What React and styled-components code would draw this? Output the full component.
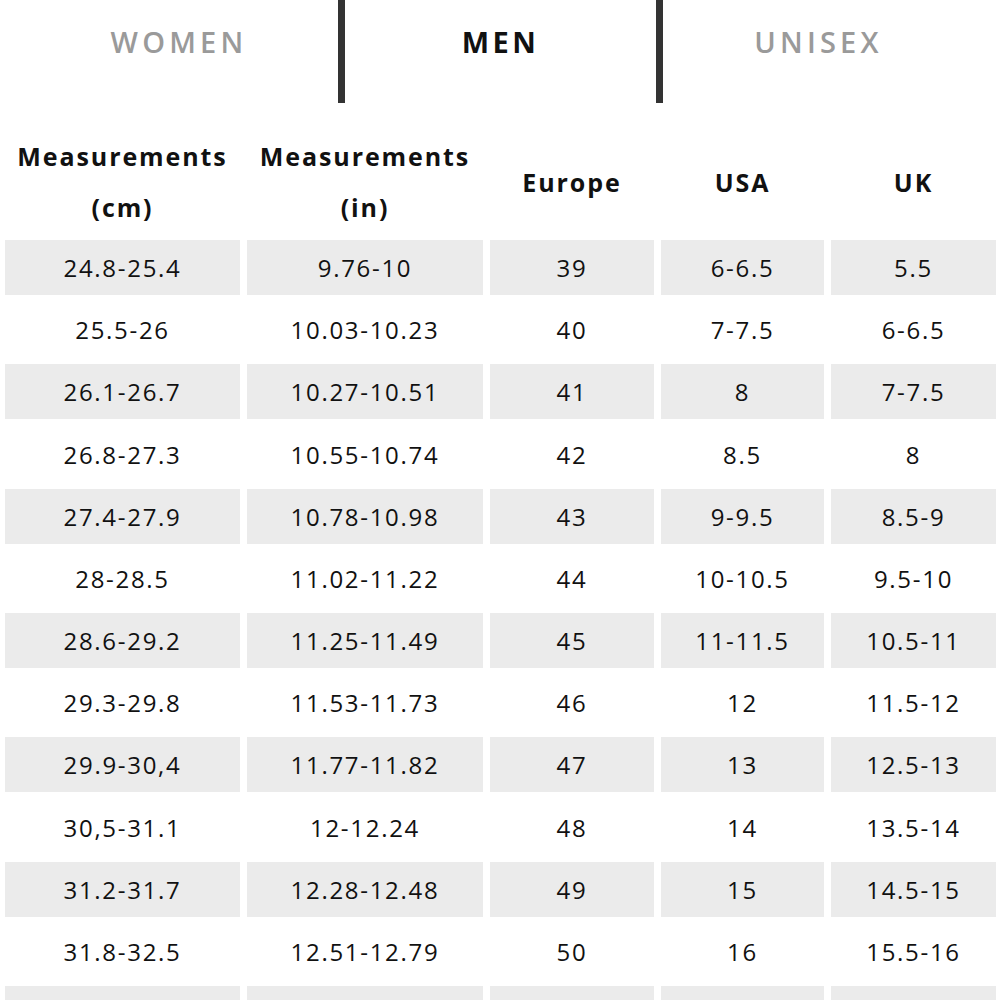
import React from "react";
import styled, { createGlobalStyle } from "styled-components";

const Global = createGlobalStyle`
  html, body { margin: 0; padding: 0; background: #fff; }
  body { font-family: "Open Sans", "Noto Sans", sans-serif; color: #111; }
`;

const Page = styled.div`
  width: 1000px;
  height: 1000px;
  overflow: hidden;
  background: #fff;
`;

const Tabs = styled.div`
  display: grid;
  grid-template-columns: 338px 7px 311px 7px 1fr;
  height: 103px;
`;

const Tab = styled.div`
  display: flex;
  justify-content: center;
  padding: 24px ${(p) => p.$pr || 0}px 0 ${(p) => p.$pl || 0}px;
  font-size: 29px;
  line-height: 36px;
  letter-spacing: ${(p) => (p.$active ? 3.5 : 4.2)}px;
  font-weight: ${(p) => (p.$active ? 700 : 600)};
  color: ${(p) => (p.$active ? "#111" : "#9a9a9a")};
`;

const Divider = styled.div`
  background: #333;
`;

const Table = styled.div`
  display: grid;
  grid-template-columns: 235px 236px 164px 163px 165px;
  column-gap: 7px;
  row-gap: 7.17px;
  padding: 28px 4px 0 5px;
`;

const HeadCell = styled.div`
  height: 102px;
  display: flex;
  align-items: center;
  justify-content: center;
  text-align: center;
  font-weight: 700;
  font-size: 25px;
  line-height: 51px;
  letter-spacing: 1.9px;
  color: #111;
`;

const Cell = styled.div`
  height: 55px;
  display: flex;
  align-items: center;
  justify-content: center;
  font-size: 24px;
  letter-spacing: 1.7px;
  color: #111;
  background: ${(p) => (p.$shade ? "#ebebeb" : "#fff")};
`;

const headers = [
  ["Measurements", "(cm)"],
  ["Measurements", "(in)"],
  ["Europe"],
  ["USA"],
  ["UK"],
];

const rows = [
  ["24.8-25.4", "9.76-10", "39", "6-6.5", "5.5"],
  ["25.5-26", "10.03-10.23", "40", "7-7.5", "6-6.5"],
  ["26.1-26.7", "10.27-10.51", "41", "8", "7-7.5"],
  ["26.8-27.3", "10.55-10.74", "42", "8.5", "8"],
  ["27.4-27.9", "10.78-10.98", "43", "9-9.5", "8.5-9"],
  ["28-28.5", "11.02-11.22", "44", "10-10.5", "9.5-10"],
  ["28.6-29.2", "11.25-11.49", "45", "11-11.5", "10.5-11"],
  ["29.3-29.8", "11.53-11.73", "46", "12", "11.5-12"],
  ["29.9-30,4", "11.77-11.82", "47", "13", "12.5-13"],
  ["30,5-31.1", "12-12.24", "48", "14", "13.5-14"],
  ["31.2-31.7", "12.28-12.48", "49", "15", "14.5-15"],
  ["31.8-32.5", "12.51-12.79", "50", "16", "15.5-16"],
  ["", "", "", "", ""],
];

export default function App() {
  return (
    <Page>
      <Global />
      <Tabs>
        <Tab $pl={20}>WOMEN</Tab>
        <Divider />
        <Tab $active>MEN</Tab>
        <Divider />
        <Tab $pr={26}>UNISEX</Tab>
      </Tabs>
      <Table>
        {headers.map((h, i) => (
          <HeadCell key={"h" + i}>
            <div>
              {h.map((line, j) => (
                <div key={j}>{line}</div>
              ))}
            </div>
          </HeadCell>
        ))}
        {rows.map((r, ri) =>
          r.map((v, ci) => (
            <Cell key={ri + "-" + ci} $shade={ri % 2 === 0}>
              {v}
            </Cell>
          ))
        )}
      </Table>
    </Page>
  );
}
